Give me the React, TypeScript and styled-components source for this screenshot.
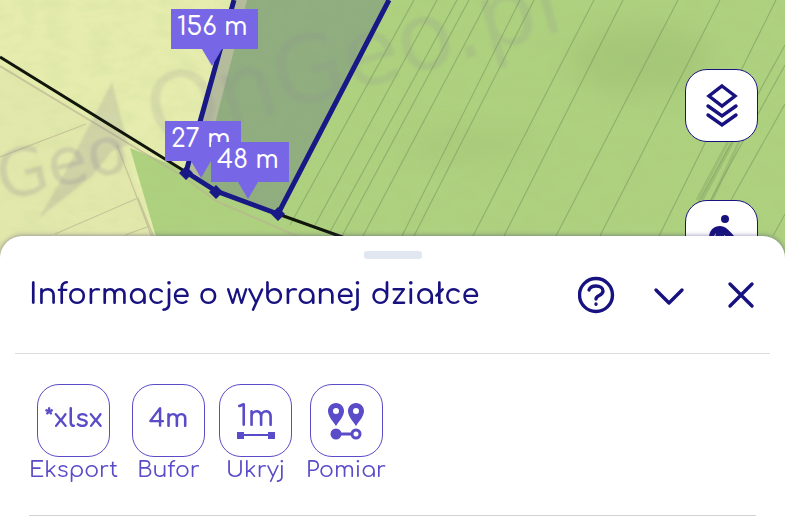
import React from "react";
import styled, { createGlobalStyle } from "styled-components";

const navy = "#17127f";
const violet = "#5a4bc8";

const GlobalStyle = createGlobalStyle`
  *, *::before, *::after { box-sizing: border-box; }
  body { margin: 0; background: #fff; font-family: Comfortaa, Quicksand, Inter, "Open Sans", sans-serif; }
  button { font: inherit; cursor: pointer; }
`;

const Screen = styled.div`
  min-height: 100vh;
  display: flex;
  flex-direction: column;
  overflow: hidden;
`;

const MapArea = styled.section`
  position: relative;
  height: 264px;
  flex: none;
  overflow: hidden;
  background: #aed180;
`;

const MapDrawing = styled.svg`
  display: block;
  width: 100%;
  height: 100%;
`;

const DistanceTag = styled.div<{ $x: number; $y: number }>`
  position: absolute;
  left: ${(p) => p.$x}px;
  top: ${(p) => p.$y}px;
  height: 40px;
  padding: 0 10px 0 6px;
  background: #7767e6;
  color: #fff;
  font-size: 25px;
  font-weight: 500;
  line-height: 37px;
  white-space: nowrap;

  &::after {
    content: "";
    position: absolute;
    top: 100%;
    left: 50%;
    margin-left: -12px;
    border: 10px solid transparent;
    border-bottom: 0;
    border-top: 17px solid #7767e6;
  }
`;

const MapTools = styled.div`
  position: absolute;
  top: 69px;
  right: 27px;
  display: flex;
  flex-direction: column;
  gap: 58px;
`;

const SquareButton = styled.button<{ $tone: string }>`
  width: 73px;
  height: 73px;
  padding: 0;
  display: flex;
  align-items: center;
  justify-content: center;
  border: 1px solid ${(p) => p.$tone};
  border-radius: 22px;
  background: #fff;
  color: ${(p) => p.$tone};
`;

const Sheet = styled.main`
  position: relative;
  flex: 1;
  margin-top: -28px;
  padding: 15px 15px 0;
  background: #fff;
  border-radius: 22px 22px 0 0;
  box-shadow: 0 0 5px rgba(50, 40, 110, 0.55);
`;

const Handle = styled.div`
  width: 58px;
  height: 8px;
  margin: 0 auto;
  border-radius: 3px;
  background: #e1e7f0;
`;

const SheetHeader = styled.header`
  display: flex;
  align-items: center;
  height: 95px;
  padding: 0 10px 22px 14px;
  border-bottom: 1px solid #dcdcdc;
`;

const Title = styled.h1`
  flex: 1;
  margin: 0;
  color: ${navy};
  font-size: 29px;
  font-weight: 600;
  line-height: 40px;
  white-space: nowrap;
`;

const HeaderActions = styled.div`
  display: flex;
  gap: 34px;
`;

const IconButton = styled.button`
  width: 38px;
  height: 38px;
  padding: 0;
  border: 0;
  background: none;
  color: ${navy};
`;

const Icon = styled.svg`
  display: block;
  fill: none;
  stroke: currentColor;
  stroke-width: 3.4;
  stroke-linecap: round;
  stroke-linejoin: round;
`;

const Actions = styled.div`
  display: flex;
  gap: 14px;
  margin: 0 14px;
  padding: 30px 0 32px;
  border-bottom: 1px solid #d2d2d2;
`;

const Action = styled.div`
  display: flex;
  flex-direction: column;
  align-items: center;
  color: ${violet};
`;

const ActionLabel = styled.label`
  font-size: 22px;
  font-weight: 400;
  line-height: 26px;
  cursor: pointer;
`;

const Glyph = styled.span`
  padding-bottom: 4px;
  font-size: 25px;
  font-weight: 700;
  line-height: 30px;
`;

const Measure = styled.span`
  display: flex;
  flex-direction: column;
  align-items: center;
  font-size: 28px;
  font-weight: 600;
  line-height: 28px;
`;

const fieldLines = [
  [414, 0, 290, 225], [437, 0, 315, 225], [457, 0, 330, 232], [469, 0, 342, 236],
  [488, 0, 363, 236], [520, 0, 402, 236], [534, 0, 414, 236], [594, 0, 473, 236],
  [623, 0, 504, 236], [678, 0, 556, 236], [720, 0, 600, 236], [776, 0, 659, 236],
  [785, 45, 697, 205], [785, 65, 708, 205], [785, 104, 731, 200], [785, 214, 773, 236],
];

const tags = [
  { x: 171, y: 9, text: "156 m" },
  { x: 165, y: 121, text: "27 m" },
  { x: 211, y: 142, text: "48 m" },
];

function ParcelMap() {
  return (
    <MapDrawing viewBox="0 0 785 264" preserveAspectRatio="xMinYMin slice" role="img" aria-label="Mapa działki">
      <defs>
        <filter id="soft"><feGaussianBlur stdDeviation="1.3" /></filter>
        <filter id="wide" x="-50%" y="-50%" width="200%" height="200%"><feGaussianBlur stdDeviation="14" /></filter>
        <filter id="grain" x="0" y="0" width="100%" height="100%">
          <feTurbulence type="fractalNoise" baseFrequency="0.045 0.08" numOctaves="3" seed="6" />
          <feColorMatrix values="0 0 0 0 .35  0 0 0 0 .5  0 0 0 0 .2  .7 0 0 0 -.27" />
        </filter>
      </defs>
      <rect width="785" height="264" fill="#aed17f" />
      <g filter="url(#wide)" opacity=".28">
        <ellipse cx="640" cy="60" rx="70" ry="35" fill="#8eae66" />
        <ellipse cx="470" cy="145" rx="70" ry="12" fill="#95b56b" />
      </g>
      <path d="M0 0H235L190 172L130 148L164 264H0Z" fill="#e5ecad" />
      <path d="M0 64L122 142L161 264H0Z" fill="#e2e8ab" />
      <path d="M235 0H390L278 214L216 191L186 172Z" fill="#90ad80" />
      <path d="M235 0H247L201 178L186 172Z" fill="#b5bc9d" />
      <rect width="785" height="264" filter="url(#grain)" opacity=".3" />
      <g stroke="#71935c" strokeWidth="1.2" opacity=".5">
        {fieldLines.map(([x1, y1, x2, y2]) => <line key={x1 + "-" + y1} x1={x1} y1={y1} x2={x2} y2={y2} />)}
      </g>
      <path d="M728 142L697 200M733 142L702 200M739 142L712 200" stroke="#7e9e62" strokeWidth="3" opacity=".35" />
      <g fill="none" stroke="#b9b391" opacity=".65">
        <path d="M0 66L184 177L216 201L320 246" strokeWidth="2" />
        <path d="M0 157L86 124M55 234L138 198L155 240M117 145L153 240M125 235L150 226" strokeWidth="1.3" />
      </g>
      <g filter="url(#soft)" fill="#8d8a96">
        <path d="M112 82L128 145L112 151L92 176L39 218L60 182Z" opacity=".22" />
        <g fontFamily="'DejaVu Sans', sans-serif">
          <text transform="translate(3 201) rotate(-14)" fontSize="66" opacity=".24">Geo</text>
          <text transform="translate(157 147) rotate(-16)" fontSize="92" opacity=".16">OnGeo.pl</text>
        </g>
      </g>
      <path d="M278 214L216 191L186 172L0 57M278 214L345 238" fill="none" stroke="#11160c" strokeWidth="3" />
      <path d="M234 0L186 172L216 191L278 214L389 0" fill="none" stroke="#191887" strokeWidth="5" />
      <path d="M179 173L186 166L193 173L186 180ZM209 192L216 185L223 192L216 199ZM271 214L278 207L285 214L278 221Z" fill="#191887" />
    </MapDrawing>
  );
}

function LayersIcon() {
  return (
    <Icon width="34" height="46" viewBox="0 0 34 46" aria-hidden="true">
      <path d="M17 3L30 13L17 23L4 13Z" strokeLinejoin="miter" />
      <path d="M3 23L17 33L31 23M3 32L17 42L31 32" strokeLinejoin="miter" />
    </Icon>
  );
}

function PersonIcon() {
  return (
    <svg width="34" height="46" viewBox="0 0 34 46" fill="currentColor" aria-hidden="true">
      <circle cx="20" cy="5" r="4" />
      <path d="M4 24C4 16 9 12 15 12C20 12 24 16 29 22L25 25L19 21L18 29L25 44H20L13 31L8 44H3L9 27L11 19L7 25Z" />
    </svg>
  );
}

function PinsIcon() {
  return (
    <svg width="38" height="38" viewBox="0 0 38 38" aria-hidden="true">
      <path fillRule="evenodd" fill="currentColor" d="M9 1C4 1 1 5 1 9C1 14 5 18 9 24C13 18 17 14 17 9C17 5 14 1 9 1ZM9 6A3 3 0 1 1 9 12A3 3 0 1 1 9 6ZM29 1C24 1 21 5 21 9C21 14 25 18 29 24C33 18 37 14 37 9C37 5 34 1 29 1ZM29 6A3 3 0 1 1 29 12A3 3 0 1 1 29 6Z" />
      <path d="M9 32H25" stroke="currentColor" strokeWidth="3" />
      <circle cx="9" cy="32" r="5.5" fill="currentColor" />
      <circle cx="29" cy="32" r="4" fill="#fff" stroke="currentColor" strokeWidth="3" />
    </svg>
  );
}

const actions = [
  { id: "export", label: "Eksport", content: <Glyph>*xlsx</Glyph> },
  { id: "buffer", label: "Bufor", content: <Glyph>4m</Glyph> },
  {
    id: "hide",
    label: "Ukryj",
    content: (
      <Measure>
        1m
        <svg width="38" height="8" viewBox="0 0 38 8" fill="currentColor" aria-hidden="true">
          <path d="M0 1H7V3H31V1H38V8H31V5H7V8H0Z" />
        </svg>
      </Measure>
    ),
  },
  { id: "measure", label: "Pomiar", content: <PinsIcon /> },
];

export default function App() {
  return (
    <Screen>
      <GlobalStyle />
      <MapArea>
        <ParcelMap />
        {tags.map((t) => <DistanceTag key={t.text} $x={t.x} $y={t.y}>{t.text}</DistanceTag>)}
        <MapTools>
          <SquareButton $tone={navy} aria-label="Warstwy"><LayersIcon /></SquareButton>
          <SquareButton $tone={navy} aria-label="Widok ulicy"><PersonIcon /></SquareButton>
        </MapTools>
      </MapArea>
      <Sheet>
        <Handle />
        <SheetHeader>
          <Title>Informacje o wybranej działce</Title>
          <HeaderActions>
            <IconButton aria-label="Pomoc">
              <Icon width="38" height="38" viewBox="0 0 38 38">
                <circle cx="18" cy="19" r="16.5" />
                <path d="M11 14C12 11 15 10 18 10C22 10 25 12 25 15C25 20 18 19 18 23M18 28V28.2" />
              </Icon>
            </IconButton>
            <IconButton aria-label="Zwiń">
              <Icon width="38" height="38" viewBox="0 0 38 38"><path d="M6 14L19 27L32 14" /></Icon>
            </IconButton>
            <IconButton aria-label="Zamknij">
              <Icon width="38" height="38" viewBox="0 0 38 38"><path d="M8 8L30 30M30 8L8 30" /></Icon>
            </IconButton>
          </HeaderActions>
        </SheetHeader>
        <Actions>
          {actions.map((a) => (
            <Action key={a.id}>
              <SquareButton id={a.id} $tone={violet}>{a.content}</SquareButton>
              <ActionLabel htmlFor={a.id}>{a.label}</ActionLabel>
            </Action>
          ))}
        </Actions>
      </Sheet>
    </Screen>
  );
}
